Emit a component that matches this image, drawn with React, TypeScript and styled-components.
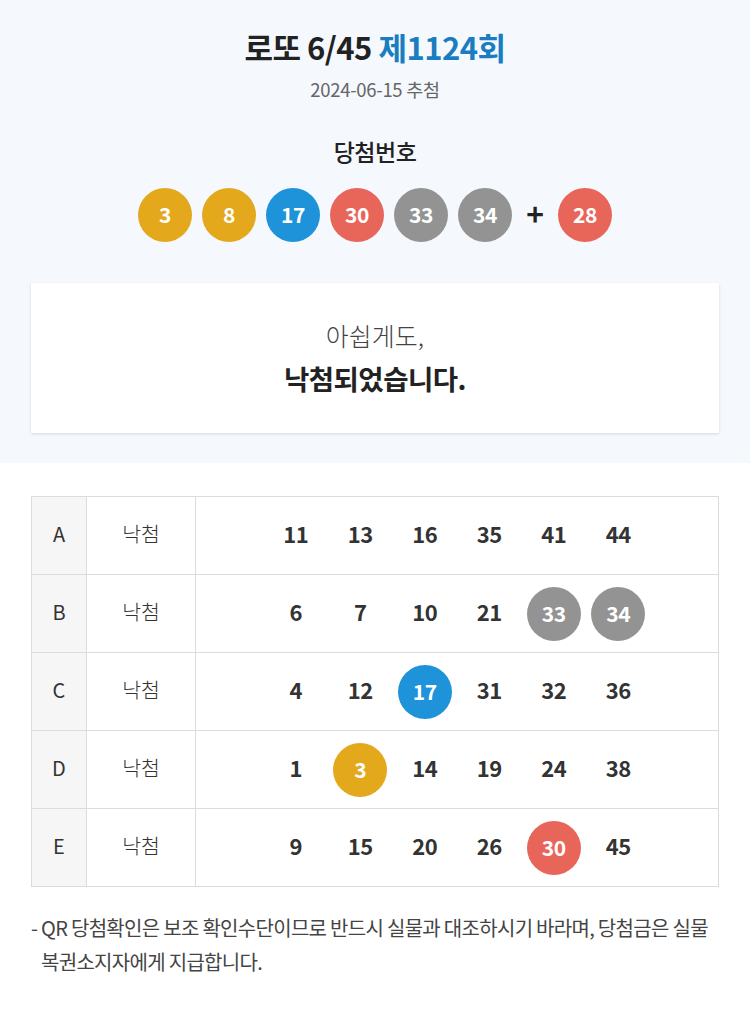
import styled, { createGlobalStyle } from "styled-components";

const GlobalStyle = createGlobalStyle`
  html, body {
    margin: 0;
    padding: 0;
    background: #ffffff;
    font-family: "Noto Sans CJK KR", "Noto Sans", sans-serif;
    color: #222;
  }
`;

type BallColor = "yellow" | "blue" | "red" | "gray";

const ballColors: Record<BallColor, string> = {
  yellow: "#e3a81c",
  blue: "#1e93d9",
  red: "#e8655a",
  gray: "#939393",
};

const colorOf = (n: number): BallColor => {
  if (n <= 10) return "yellow";
  if (n <= 20) return "blue";
  if (n <= 30) return "red";
  return "gray";
};

const winning = [3, 8, 17, 30, 33, 34];
const bonus = 28;

const games = [
  { label: "A", nums: [11, 13, 16, 35, 41, 44] },
  { label: "B", nums: [6, 7, 10, 21, 33, 34] },
  { label: "C", nums: [4, 12, 17, 31, 32, 36] },
  { label: "D", nums: [1, 3, 14, 19, 24, 38] },
  { label: "E", nums: [9, 15, 20, 26, 30, 45] },
];

export default function App() {
  return (
    <Page>
      <GlobalStyle />
      <Header>
        <Title>
          로또 6/45 <Round>제1124회</Round>
        </Title>
        <DrawDate>2024-06-15 추첨</DrawDate>
        <SubTitle>당첨번호</SubTitle>
        <Balls>
          {winning.map((n) => (
            <Ball key={n} color={ballColors[colorOf(n)]}>
              {n}
            </Ball>
          ))}
          <Plus>+</Plus>
          <Ball color={ballColors[colorOf(bonus)]}>{bonus}</Ball>
        </Balls>
        <ResultCard>
          <Sorry>아쉽게도,</Sorry>
          <ResultText>낙첨되었습니다.</ResultText>
        </ResultCard>
      </Header>

      <Table>
        {games.map((g) => (
          <Row key={g.label}>
            <LabelCell>{g.label}</LabelCell>
            <StatusCell>낙첨</StatusCell>
            <NumbersCell>
              {g.nums.map((n) => (
                <NumSlot key={n}>
                  {winning.includes(n) ? (
                    <Ball color={ballColors[colorOf(n)]}>{n}</Ball>
                  ) : (
                    <NumText>{n}</NumText>
                  )}
                </NumSlot>
              ))}
            </NumbersCell>
          </Row>
        ))}
      </Table>

      <Notice>
        - QR 당첨확인은 보조 확인수단이므로 반드시 실물과 대조하시기 바라며,
        당첨금은 실물 복권소지자에게 지급합니다.
      </Notice>
    </Page>
  );
}

const Page = styled.div`
  width: 750px;
  min-height: 1012px;
  background: #ffffff;
`;

const Header = styled.section`
  background: #f5f9fe;
  padding: 27px 31px 30px;
  display: flex;
  flex-direction: column;
  align-items: center;
`;

const Title = styled.h1`
  margin: 0;
  font-size: 31px;
  line-height: 40px;
  font-weight: 700;
  color: #222;
  letter-spacing: -0.5px;
`;

const Round = styled.span`
  color: #1a7dc0;
`;

const DrawDate = styled.div`
  margin-top: 10px;
  font-size: 18.5px;
  line-height: 24px;
  color: #666;
  letter-spacing: -0.3px;
`;

const SubTitle = styled.h2`
  margin: 35px 0 0;
  font-size: 23px;
  line-height: 30px;
  font-weight: 500;
  color: #222;
  letter-spacing: -0.5px;
`;

const Balls = styled.div`
  margin-top: 20px;
  display: flex;
  align-items: center;
  gap: 10px;
`;

const Ball = styled.span<{ color: string }>`
  width: 54px;
  height: 54px;
  border-radius: 50%;
  background: ${(p) => p.color};
  color: #fff;
  display: inline-flex;
  align-items: center;
  justify-content: center;
  font-size: 21px;
  font-weight: 700;
  letter-spacing: -0.5px;
  padding-bottom: 2px;
  box-sizing: border-box;
`;

const Plus = styled.span`
  width: 26px;
  text-align: center;
  font-size: 30px;
  font-weight: 700;
  color: #222;
  line-height: 54px;
  margin: 0 0 4px;
`;

const ResultCard = styled.div`
  margin-top: 39px;
  width: 100%;
  height: 150px;
  box-sizing: border-box;
  background: #ffffff;
  box-shadow: 0 1px 3px rgba(0, 0, 0, 0.13);
  display: flex;
  flex-direction: column;
  align-items: center;
  justify-content: center;
  padding-bottom: 2px;
`;

const Sorry = styled.div`
  font-size: 25px;
  line-height: 42px;
  font-weight: 300;
  color: #444;
`;

const ResultText = styled.div`
  font-size: 27.5px;
  line-height: 44px;
  font-weight: 700;
  color: #222;
  letter-spacing: -0.5px;
`;

const Table = styled.div`
  margin: 33px 31px 0;
  border: 1px solid #dcdcdc;
  display: flex;
  flex-direction: column;
`;

const Row = styled.div`
  display: grid;
  grid-template-columns: 55px 109px 1fr;
  height: 77px;
  & + & {
    border-top: 1px solid #dcdcdc;
  }
`;

const LabelCell = styled.div`
  background: #f6f6f6;
  border-right: 1px solid #dcdcdc;
  display: flex;
  align-items: center;
  justify-content: center;
  font-size: 20px;
  color: #333;
  padding-bottom: 5px;
`;

const StatusCell = styled.div`
  border-right: 1px solid #dcdcdc;
  display: flex;
  align-items: center;
  justify-content: center;
  font-size: 20.5px;
  font-weight: 300;
  color: #333;
  padding-bottom: 5px;
`;

const NumbersCell = styled.div`
  display: flex;
  align-items: center;
  justify-content: center;
`;

const NumSlot = styled.div`
  width: 64.5px;
  display: flex;
  align-items: center;
  justify-content: center;
`;

const NumText = styled.span`
  font-size: 22px;
  font-weight: 700;
  color: #333;
  letter-spacing: -0.5px;
  margin-bottom: 5px;
`;

const Notice = styled.p`
  margin: 24px 31px 0;
  padding-left: 10px;
  text-indent: -10px;
  font-size: 20px;
  line-height: 34px;
  font-weight: 400;
  color: #444;
  letter-spacing: -0.7px;
`;
